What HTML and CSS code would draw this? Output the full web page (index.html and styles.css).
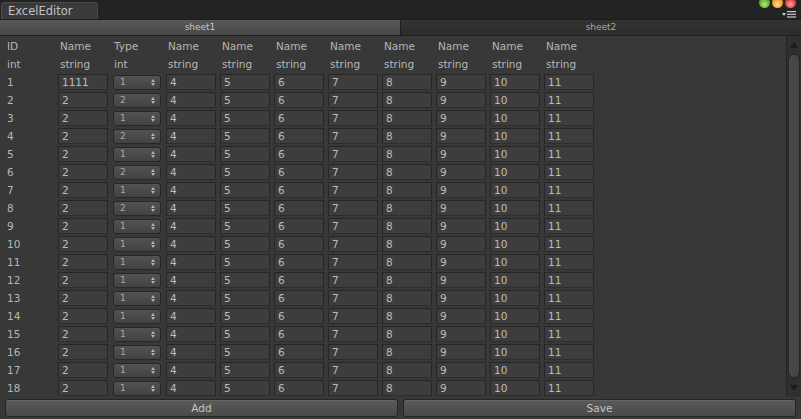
FILE: index.html
```html
<!DOCTYPE html>
<html>
<head>
<meta charset="utf-8">
<link rel="stylesheet" href="styles.css">
</head>
<body>
<div class="window">
  <div class="titlebar">
    <div class="wintab">ExcelEditor</div>
    <div class="lights">
      <span class="light green"></span>
      <span class="light orange"></span>
      <span class="light red"></span>
    </div>
    <div class="menuicon">
      <svg width="14" height="7" viewBox="0 0 14 7"><polygon points="0,2 4,2 2,5" fill="#c8c8c8"/><rect x="5" y="0" width="9" height="1.2" fill="#c8c8c8"/><rect x="5" y="2.7" width="9" height="1.2" fill="#c8c8c8"/><rect x="5" y="5.4" width="9" height="1.2" fill="#c8c8c8"/></svg>
    </div>
  </div>
  <div class="sheettabs">
    <div class="sheettab active">sheet1</div>
    <div class="sheettab">sheet2</div>
  </div>
  <div class="body">
    <div class="tablearea">
      <div class="grid" id="grid"></div>
    </div>
    <div class="scrollbar">
      <div class="arrow up"></div>
      <div class="thumb"></div>
      <div class="arrow down"></div>
    </div>
  </div>
  <div class="buttons">
    <div class="btn">Add</div>
    <div class="btn">Save</div>
  </div>
</div>
<script src="app.js"></script>
</body>
</html>
```
FILE: styles.css
```css
html, body {
  margin: 0;
  padding: 0;
  background: #383838;
}
.window {
  width: 801px;
  height: 419px;
  display: flex;
  flex-direction: column;
  background: #383838;
  font-family: "DejaVu Sans", sans-serif;
  color: #b6b6b6;
  overflow: hidden;
}
.titlebar {
  height: 19px;
  background: #232323;
  display: flex;
  align-items: flex-end;
  position: relative;
  flex: none;
}
.wintab {
  margin-left: 1px;
  width: 97px;
  background: #3a3a3a;
  border: 1px solid #4a4a4a;
  border-bottom: none;
  border-radius: 4px 4px 0 0;
  box-sizing: border-box;
  height: 17px;
  font-size: 11.5px;
  color: #c2c2c2;
  padding-left: 6px;
  line-height: 16px;
}
.lights {
  position: absolute;
  top: -3px;
  right: 5px;
  display: flex;
  gap: 2px;
}
.light {
  width: 11px;
  height: 11px;
  border-radius: 50%;
  display: block;
}
.light.green { background: radial-gradient(circle at 50% 65%, #b8ec80 0%, #5cae2c 55%, #2f6a14 100%); }
.light.orange { background: radial-gradient(circle at 50% 65%, #ffe0a0 0%, #eb9c2c 55%, #9a5a10 100%); }
.light.red { background: radial-gradient(circle at 50% 65%, #ffa8a8 0%, #e23c3c 55%, #8a1414 100%); }
.menuicon {
  position: absolute;
  right: 5px;
  top: 11px;
  line-height: 0;
}
.sheettabs {
  height: 15px;
  display: flex;
  border-top: 1px solid #1c1c1c;
  border-bottom: 1px solid #1e1e1e;
  flex: none;
}
.sheettab {
  flex: 1;
  font-size: 9px;
  text-align: center;
  line-height: 15px;
  color: #a8a8a8;
  background: linear-gradient(#333333, #2c2c2c);
}
.sheettab.active {
  background: linear-gradient(#585858, #474747);
  border-right: 1px solid #1e1e1e;
  color: #c8c8c8;
}
.body {
  flex: 1;
  display: flex;
  min-height: 0;
}
.tablearea {
  flex: 1;
  padding: 1px 0 0 5px;
  overflow: hidden;
}
.grid {
  display: grid;
  grid-template-columns: 53px repeat(11, 54px);
  grid-auto-rows: 18px;
  font-size: 10.5px;
}
.lbl {
  line-height: 18px;
  padding-left: 2px;
  white-space: nowrap;
}
.fcell {
  display: flex;
  align-items: center;
}
.field {
  width: 50px;
  height: 16px;
  box-sizing: border-box;
  background: #3d3d3d;
  border: 1px solid #262626;
  border-bottom-color: #2e2e2e;
  padding-left: 3px;
  line-height: 14px;
  color: #bcbcbc;
}
.popup {
  margin-left: 1px;
  width: 48px;
  height: 15px;
  box-sizing: border-box;
  border-radius: 3px;
  border: 1px solid #272727;
  background: linear-gradient(#525252, #424242);
  padding-left: 6px;
  font-size: 9px;
  line-height: 13px;
  color: #a8a8a8;
  position: relative;
}
.popup::before,
.popup::after {
  content: "";
  position: absolute;
  right: 5px;
  width: 0;
  height: 0;
  border-left: 2.5px solid transparent;
  border-right: 2.5px solid transparent;
}
.popup::before {
  top: 3px;
  border-bottom: 3px solid #b0b0b0;
}
.popup::after {
  top: 7px;
  border-top: 3px solid #b0b0b0;
}
.scrollbar {
  width: 14px;
  background: #2f2f2f;
  border-left: 1px solid #232323;
  display: flex;
  flex-direction: column;
  align-items: center;
  padding: 0 0 1px 0;
}
.arrow {
  width: 0;
  height: 0;
  border-left: 4px solid transparent;
  border-right: 4px solid transparent;
  flex: none;
}
.arrow.up {
  border-bottom: 6px solid #1a1a1a;
  margin-top: 6px;
  margin-bottom: 6px;
}
.arrow.down {
  border-top: 6px solid #1a1a1a;
  margin-top: 7px;
  margin-bottom: 5px;
}
.thumb {
  flex: 1;
  width: 12px;
  border-radius: 6px;
  background: linear-gradient(to right, #4a4a4a, #444444);
  border: 1px solid #262626;
  box-sizing: border-box;
}
.buttons {
  height: 22px;
  flex: none;
  display: flex;
  gap: 5px;
  padding: 2px 5px 3px 5px;
  box-sizing: border-box;
  background: #383838;
}
.btn {
  flex: 1;
  height: 18px;
  box-sizing: border-box;
  border: 1px solid #262626;
  border-radius: 3px;
  background: linear-gradient(#5a5a5a, #4a4a4a);
  box-shadow: inset 0 1px 0 #666666;
  text-align: center;
  font-size: 10.5px;
  line-height: 16px;
  color: #c4c4c4;
}
```
FILE: app.js
```js
(function () {
  var g = document.getElementById('grid');
  function lbl(t) {
    var d = document.createElement('div');
    d.className = 'lbl';
    d.textContent = t;
    g.appendChild(d);
  }
  function field(t, cls) {
    var c = document.createElement('div');
    c.className = 'fcell';
    var f = document.createElement('div');
    f.className = cls;
    f.textContent = t;
    c.appendChild(f);
    g.appendChild(c);
  }
  var h1 = ['ID', 'Name', 'Type', 'Name', 'Name', 'Name', 'Name', 'Name', 'Name', 'Name', 'Name', ''];
  var h2 = ['int', 'string', 'int', 'string', 'string', 'string', 'string', 'string', 'string', 'string', 'string', ''];
  h1.forEach(lbl);
  h2.forEach(lbl);
  for (var r = 1; r <= 18; r++) {
    lbl(String(r));
    field(r === 1 ? '1111' : '2', 'field');
    var t = (r <= 8 && r % 2 === 0) ? '2' : '1';
    field(t, 'popup');
    ['4', '5', '6', '7', '8', '9', '10', '11'].forEach(function (v) { field(v, 'field'); });
    lbl('');
  }
})();
```
